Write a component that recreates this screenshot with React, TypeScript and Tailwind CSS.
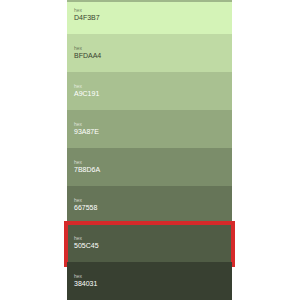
import React from "react";

const rows = [
  { hex: "D4F3B7", dark: false },
  { hex: "BFDAA4", dark: false },
  { hex: "A9C191", dark: true },
  { hex: "93A87E", dark: true },
  { hex: "7B8D6A", dark: true },
  { hex: "667558", dark: true },
  { hex: "505C45", dark: true, selected: true },
  { hex: "384031", dark: true },
];

export default function App() {
  return (
    <div
      className="w-[300px] h-[300px] bg-white overflow-hidden"
      style={{ fontFamily: '"Liberation Sans", Arial, sans-serif' }}
    >
      <div className="ml-[67px] w-[165px] flex flex-col">
        {rows.map((r, i) => (
          <div
            key={r.hex}
            className={
              "relative flex flex-col pl-[7px] " +
              (i === 0
                ? "h-[34px] pt-[6px] border-t-2 border-[#9fb78a]"
                : "h-[38px] pt-[12px]")
            }
            style={{ backgroundColor: "#" + r.hex }}
          >
            <div
              className={
                "text-[5px] leading-[5px] " +
                (r.dark ? "text-white/70" : "text-black/50")
              }
            >
              hex
            </div>
            <div
              className={
                "mt-[1px] text-[7px] leading-[8px] " +
                (r.dark ? "text-white" : "text-[#3a4330]")
              }
            >
              {r.hex}
            </div>
            {r.selected && (
              <div className="absolute -top-[3px] -bottom-[5px] -left-[3px] -right-[3px] border-4 border-[#d62a2a]" />
            )}
          </div>
        ))}
      </div>
    </div>
  );
}
